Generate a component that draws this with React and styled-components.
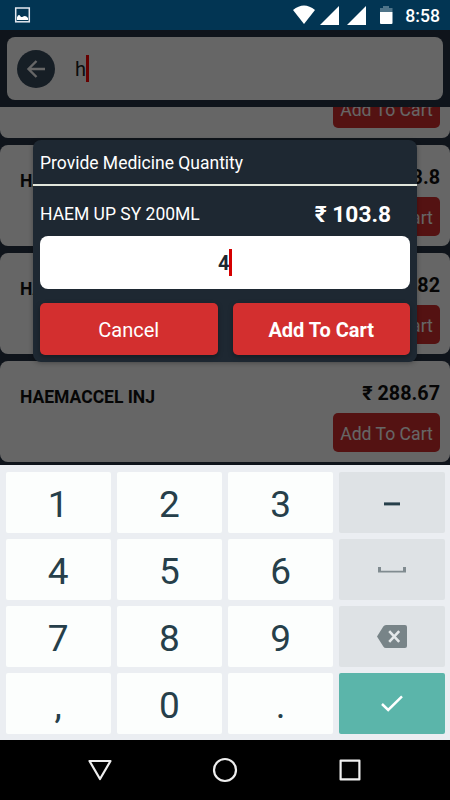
import React, { useState } from "react";
import styled, { createGlobalStyle } from "styled-components";

const GlobalStyle = createGlobalStyle`
  * {
    box-sizing: border-box;
  }

  body {
    margin: 0;
    background: #000;
    font-family: Roboto, "Noto Sans", "Liberation Sans", sans-serif;
  }

  button {
    font-family: inherit;
    border: none;
    padding: 0;
  }
`;

const Screen = styled.div`
  display: flex;
  flex-direction: column;
  width: 450px;
  height: 800px;
  overflow: hidden;
`;

const StatusBar = styled.div`
  display: flex;
  align-items: center;
  justify-content: space-between;
  flex: none;
  height: 30px;
  padding: 0 10px 0 14px;
  background: #023553;
`;

const StatusIcons = styled.div`
  display: flex;
  align-items: center;
`;

const Clock = styled.span`
  margin-left: 12px;
  color: #fff;
  font-size: 17.6px;
  font-weight: 500;
  line-height: 30px;
  padding-top: 1px;
`;

const Page = styled.div`
  position: relative;
  display: flex;
  flex-direction: column;
  flex: none;
  height: 435px;
  background: #273344;
  overflow: hidden;
`;

const Header = styled.div`
  flex: none;
  height: 77px;
  padding: 7px;
  background: #273344;
`;

const SearchBox = styled.div`
  display: flex;
  align-items: center;
  height: 63px;
  padding-left: 10px;
  border-radius: 8px;
  background: #fff;
`;

const BackButton = styled.button`
  display: flex;
  align-items: center;
  justify-content: center;
  width: 38px;
  height: 38px;
  margin-right: 20px;
  border-radius: 50%;
  background: #384b5e;
`;

const SearchText = styled.span`
  font-size: 20px;
  line-height: 24px;
  padding-top: 1px;
  color: #222;
`;

const Caret = styled.span`
  width: 2.6px;
  height: 27px;
  background: ${props => props.color};
`;

const List = styled.div`
  display: flex;
  flex-direction: column;
  justify-content: flex-end;
  flex: 1;
  gap: 7px;
  min-height: 0;
  padding-bottom: 3px;
  overflow: hidden;
`;

const Card = styled.div`
  display: flex;
  justify-content: space-between;
  flex: none;
  height: 101px;
  padding: 20px 10px 0 20px;
  border-radius: 8px;
  background: #fff;
`;

const MedicineName = styled.div`
  padding-top: 6px;
  font-size: 17.5px;
  font-weight: 700;
  line-height: 20px;
  color: #111;
`;

const CardSide = styled.div`
  display: flex;
  flex-direction: column;
  align-items: flex-end;
`;

const CardPrice = styled.div`
  height: 32px;
  padding-top: 1px;
  font-size: 19.8px;
  font-weight: 700;
  line-height: 24px;
  color: #111;
`;

const CartButton = styled.button`
  width: 107px;
  height: 39px;
  border-radius: 5px;
  background: #d32f2f;
  color: #fff;
  font-size: 17.6px;
  line-height: 39px;
  padding-top: 2px;
`;

const Backdrop = styled.div`
  position: absolute;
  inset: 0;
  display: flex;
  align-items: flex-start;
  padding: 110px 33px 0 33px;
  background: rgba(0, 0, 0, 0.6);
`;

const Dialog = styled.div`
  flex: 1;
  height: 222px;
  border-radius: 8px;
  background: #1e2832;
  box-shadow: 0 1px 5px rgba(0, 0, 0, 0.3);
`;

const DialogTitle = styled.div`
  height: 46px;
  padding: 0 7px;
  border-bottom: 2px solid #e2e6dc;
  color: #fff;
  font-size: 17.5px;
  line-height: 46px;
`;

const DialogBody = styled.div`
  padding: 0 7px;
`;

const ItemRow = styled.div`
  display: flex;
  align-items: center;
  justify-content: space-between;
  height: 50px;
  padding-right: 19px;
  padding-top: 6px;
  color: #fff;
  font-size: 17.5px;
`;

const ItemPrice = styled.span`
  padding-top: 1px;
  font-size: 22.7px;
  font-weight: 700;
`;

const QuantityField = styled.div`
  display: flex;
  align-items: center;
  justify-content: center;
  height: 53px;
  border-radius: 8px;
  background: #fff;
  color: #1e2832;
  font-size: 20px;
  font-weight: 700;
`;

const Actions = styled.div`
  display: flex;
  gap: 15px;
  margin-top: 14px;
`;

const ActionButton = styled.button`
  flex: 1;
  height: 52px;
  border-radius: 5px;
  background: #d32f2f;
  box-shadow: 0 2px 5px rgba(0, 0, 0, 0.35);
  color: #fff;
  font-size: 20px;
  font-weight: ${props => (props.$strong ? 700 : 400)};
  line-height: 50px;
  padding-top: 2px;
`;

const Keyboard = styled.div`
  display: grid;
  grid-template-columns: repeat(4, 1fr);
  grid-auto-rows: 61px;
  gap: 6px;
  flex: none;
  height: 275px;
  padding: 7px 5.5px 0;
  background: #ebeef2;
`;

const keyColors = {
  digit: "#fcfefd",
  side: "#dee2e5",
  enter: "#5bb5aa"
};

const Key = styled.button`
  display: flex;
  align-items: center;
  justify-content: center;
  border-radius: 2px;
  background: ${props => keyColors[props.$kind]};
  color: #263f4a;
  font-size: 37px;
  line-height: 44px;
  padding-top: ${props => (props.$kind === "digit" ? "5px" : 0)};
`;

const NavBar = styled.div`
  display: flex;
  align-items: center;
  justify-content: space-between;
  flex: none;
  height: 60px;
  padding: 0 87px;
  background: #000;
`;

const medicines = [
  { name: "HAEM UP CAP", price: "96.5" },
  { name: "HAEM UP SY 200ML", price: "103.8" },
  { name: "HAEM UP", price: "82" },
  { name: "HAEMACCEL INJ", price: "288.67" }
];

const PictureIcon = () => (
  <svg width="18" height="30" viewBox="0 0 18 30">
    <rect x="1.7" y="8" width="13.6" height="13.8" fill="none" stroke="#e4e8f0" strokeWidth="1.5" />
    <path d="M3 20V17.2Q4.7 13.4 6.4 16.2Q7.6 17.8 9 16.6Q11.6 14.8 14 18V20Z" fill="#fff" />
  </svg>
);

const SignalIcon = () => (
  <svg width="27" height="30" viewBox="0 0 27 30">
    <path d="M4 25H23V6Z" fill="#fff" />
  </svg>
);

const StatusRight = () => (
  <StatusIcons>
    <svg width="24" height="30" viewBox="0 0 24 30">
      <path d="M1 10Q12 1 23 10L12 24Z" fill="#fff" />
    </svg>
    <SignalIcon />
    <SignalIcon />
    <svg width="23" height="30" viewBox="0 0 23 30">
      <path d="M10 12V8H13V6H19V8H22.5V12Z" fill="#4f7489" />
      <path d="M10 12H22.5V23Q22.5 24 21.5 24H11Q10 24 10 23Z" fill="#fff" />
    </svg>
    <Clock>8:58</Clock>
  </StatusIcons>
);

const ArrowIcon = () => (
  <svg width="20" height="18" viewBox="0 0 20 18" fill="none" stroke="#fff" strokeWidth="2.4">
    <path d="M19 9H3M10.5 1L2.5 9L10.5 17" />
  </svg>
);

const SpaceIcon = () => (
  <svg width="28" height="8" viewBox="0 0 28 8">
    <path d="M0 1H3V4.7H25V1H28V6.6H0Z" fill="#808b90" />
  </svg>
);

const DeleteIcon = () => (
  <svg width="30" height="23" viewBox="0 0 30 23">
    <path d="M0 11.5L6.3 1.5Q7.2 0 9 0H28Q30 0 30 2V21Q30 23 28 23H9Q7.2 23 6.3 21.5Z" fill="#788488" />
    <path d="M12.2 6.2L22.2 16.8M22.2 6.2L12.2 16.8" stroke="#e4e8ea" strokeWidth="2.6" />
  </svg>
);

const MinusIcon = () => (
  <svg width="16" height="7" viewBox="0 0 16 7">
    <path d="M0 3.4H16V6.4H0Z" fill="#263f4a" />
  </svg>
);

const CheckIcon = () => (
  <svg width="22" height="17" viewBox="0 0 22 17">
    <path d="M1 9L7.2 15L21 1.3" fill="none" stroke="#fff" strokeWidth="2.5" />
  </svg>
);

const keys = [
  "1", "2", "3", { id: "minus", kind: "side", icon: <MinusIcon /> },
  "4", "5", "6", { id: "space", kind: "side", icon: <SpaceIcon /> },
  "7", "8", "9", { id: "delete", kind: "side", icon: <DeleteIcon /> },
  ",", "0", ".", { id: "enter", kind: "enter", icon: <CheckIcon /> }
];

const App = () => {
  const [quantity, setQuantity] = useState("4");

  const pressKey = key => {
    if (typeof key === "string") {
      setQuantity(quantity + key);
    } else if (key.id === "delete") {
      setQuantity(quantity.slice(0, -1));
    }
  };

  return (
    <Screen>
      <GlobalStyle />
      <StatusBar>
        <PictureIcon />
        <StatusRight />
      </StatusBar>

      <Page>
        <Header>
          <SearchBox>
            <BackButton><ArrowIcon /></BackButton>
            <SearchText>h</SearchText>
            <Caret color="#ff0000" />
          </SearchBox>
        </Header>
        <List>
          {medicines.map(item => (
            <Card key={item.name}>
              <MedicineName>{item.name}</MedicineName>
              <CardSide>
                <CardPrice>₹ {item.price}</CardPrice>
                <CartButton>Add To Cart</CartButton>
              </CardSide>
            </Card>
          ))}
        </List>

        <Backdrop>
          <Dialog>
            <DialogTitle>Provide Medicine Quantity</DialogTitle>
            <DialogBody>
              <ItemRow>
                <span>HAEM UP SY 200ML</span>
                <ItemPrice>₹ 103.8</ItemPrice>
              </ItemRow>
              <QuantityField>
                {quantity}
                <Caret color="#d50000" />
              </QuantityField>
              <Actions>
                <ActionButton>Cancel</ActionButton>
                <ActionButton $strong>Add To Cart</ActionButton>
              </Actions>
            </DialogBody>
          </Dialog>
        </Backdrop>
      </Page>

      <Keyboard>
        {keys.map(key => (
          <Key key={key.id || key} $kind={key.kind || "digit"} onClick={() => pressKey(key)}>
            {key.icon || key}
          </Key>
        ))}
      </Keyboard>

      <NavBar>
        <svg width="26" height="26" viewBox="0 0 26 26" fill="none" stroke="#eee" strokeWidth="2.2" strokeLinejoin="round">
          <path d="M2.5 4H23.5L13 22Z" />
        </svg>
        <svg width="26" height="26" viewBox="0 0 26 26" fill="none" stroke="#eee" strokeWidth="2.2">
          <circle cx="13" cy="13" r="11" />
        </svg>
        <svg width="26" height="26" viewBox="0 0 26 26" fill="none" stroke="#eee" strokeWidth="2.2" strokeLinejoin="round">
          <rect x="3.6" y="3.6" width="18.8" height="18.8" />
        </svg>
      </NavBar>
    </Screen>
  );
};

export default App;
